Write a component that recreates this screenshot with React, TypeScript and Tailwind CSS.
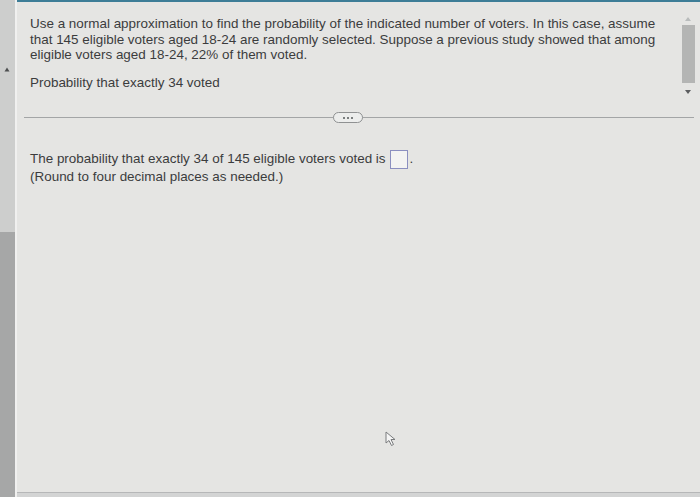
import React from 'react';

const font = { fontFamily: '"Liberation Sans", Arial, sans-serif' };

const Scrollbar: React.FC = () => (
  <div className="flex w-[16px] flex-col items-center pt-[14px]">
    <svg width="8" height="6" viewBox="0 0 8 6">
      <path d="M1 5 L4 1 L7 5 Z" fill="#b9bcbc" />
    </svg>
    <div className="mt-[3px] h-[58px] w-[13px] bg-[#b4b5b4]" />
    <svg className="mt-[6px]" width="8" height="6" viewBox="0 0 8 6">
      <path d="M1 1 L4 5 L7 1 Z" fill="#5b5d5f" />
    </svg>
  </div>
);

export default function App() {
  return (
    <div className="flex h-[497px] w-[700px] overflow-hidden bg-[#e5e5e3] text-[13.45px] leading-[15.5px] text-[#3b3c3d]" style={font}>
      <div className="flex w-[15px] flex-col bg-[#cdcecd]">
        <div className="relative h-[232px]">
          <svg className="absolute left-[4px] top-[67px]" width="6" height="5" viewBox="0 0 6 5">
            <path d="M0.5 4.5 L3 0.5 L5.5 4.5 Z" fill="#4d4f50" />
          </svg>
        </div>
        <div className="flex-1 bg-[#a6a7a7]" />
      </div>
      <div className="w-[2px] bg-[#f0f0ef]" />
      <div className="flex flex-1 flex-col border-t-[2px] border-[#3d7d97]">
        <div className="flex h-[106px]">
          <div className="flex-1 pl-[13px] pt-[14px]">
            <p>
              Use a normal approximation to find the probability of the indicated number of voters. In this case, assume
              <br />
              that 145 eligible voters aged 18-24 are randomly selected. Suppose a previous study showed that among
              <br />
              eligible voters aged 18-24, 22% of them voted.
            </p>
            <p className="mt-[12px]">Probability that exactly 34 voted</p>
          </div>
          <div className="pr-[4px]">
            <Scrollbar />
          </div>
        </div>
        <div className="relative ml-[7px] mr-[6px] mt-[9px] h-[1px] bg-[#a3a5a6]">
          <div className="absolute left-[309px] top-[-5px] flex h-[11px] w-[30px] items-center justify-center rounded-[6px] border border-[#8f9192] bg-[#ecedec]">
            <span className="flex gap-[2px]">
              <span className="h-[2px] w-[2px] rounded-full bg-[#55585a]" />
              <span className="h-[2px] w-[2px] rounded-full bg-[#55585a]" />
              <span className="h-[2px] w-[2px] rounded-full bg-[#55585a]" />
            </span>
          </div>
        </div>
        <div className="relative flex-1 pl-[13px] pt-[32px]">
          <p className="flex items-end">
            The probability that exactly 34 of 145 eligible voters voted is
            <span className="ml-[4px] mr-[2px] mb-[-3px] inline-block h-[19px] w-[18px] border border-[#8b8fc0] bg-[#f3f3f2]" />
            <span>.</span>
          </p>
          <p className="mt-[3px]">(Round to four decimal places as needed.)</p>
          <svg className="absolute left-[368px] top-[313px]" width="14" height="16" viewBox="0 0 14 16">
            <path d="M1 1 L1 12 L4 9.5 L6.5 14.5 L8.5 13.5 L6 8.5 L10 8.5 Z" fill="#f5f5f5" stroke="#7a7c7e" strokeWidth="1" strokeLinejoin="round" />
          </svg>
        </div>
        <div className="h-[5px] border-t border-[#b6b7b8] bg-[#d3d4d4]" />
      </div>
    </div>
  );
}
